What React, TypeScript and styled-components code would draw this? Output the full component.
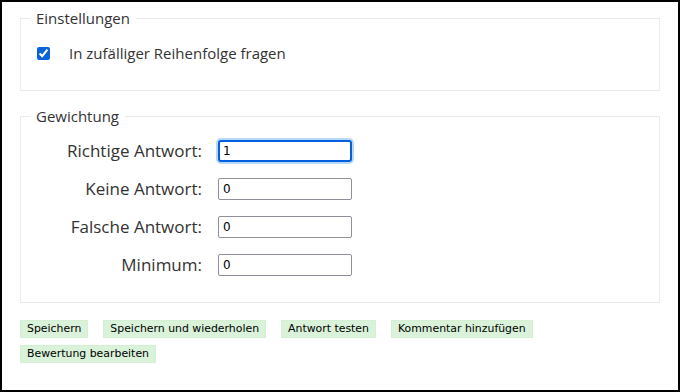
import React from "react";
import styled, { createGlobalStyle } from "styled-components";

const Global = createGlobalStyle`
  html, body { margin: 0; padding: 0; background: #fff; }
  * { box-sizing: border-box; }
`;

const Page = styled.div`
  width: 680px;
  height: 392px;
  border: 2px solid #000;
  padding: 8px 18px 0 18px;
  font-family: "Open Sans", "Noto Sans", sans-serif;
  color: #333;
  background: #fff;
`;

const Fieldset = styled.fieldset`
  margin: 0 0 17px 0;
  border: 1px solid #eaeaea;
  padding: 0;
  min-width: 0;
`;

const Legend = styled.legend`
  margin-left: 9px;
  padding: 0 6px;
  font-size: 15px;
  line-height: 16px;
  color: #333;
`;

const CheckRow = styled.label`
  display: flex;
  align-items: center;
  gap: 19px;
  padding: 17px 0 27px 16px;
  font-size: 15px;
  line-height: 20px;
  color: #333;
`;

const Check = styled.input`
  margin: 0;
  width: 13px;
  height: 13px;
  accent-color: #0b63d9;
`;

const Grid = styled.div`
  display: grid;
  grid-template-columns: 181px 134px;
  column-gap: 16px;
  row-gap: 16px;
  align-items: center;
  padding: 16px 0 26px 0;
`;

const FieldLabel = styled.label`
  text-align: right;
  font-size: 17px;
  line-height: 22px;
  color: #333;
`;

const Input = styled.input<{ $focused?: boolean }>`
  width: 134px;
  height: 22px;
  margin: 0;
  padding: 1px 4px;
  font-family: "DejaVu Sans", sans-serif;
  font-size: 12px;
  color: #000;
  border: 1px solid #8f8f9d;
  border-radius: 2px;
  background: #fff;
  ${(p) =>
    p.$focused &&
    `border: 2px solid #0060df; padding: 0 3px; box-shadow: 0 0 0 2px #b8d8f8; outline: none; border-radius: 3px;`}
`;

const Buttons = styled.div`
  display: flex;
  flex-wrap: wrap;
  column-gap: 15px;
  row-gap: 7px;
`;

const Button = styled.button`
  margin: 0;
  padding: 0 6px;
  height: 18px;
  border: 1px solid #d4efd4;
  background: #d9f2d9;
  font-family: "DejaVu Sans", sans-serif;
  font-size: 10.9px;
  color: #000;
  line-height: 16px;
  cursor: pointer;
`;

const fields = [
  { label: "Richtige Antwort:", value: "1", focused: true },
  { label: "Keine Antwort:", value: "0" },
  { label: "Falsche Antwort:", value: "0" },
  { label: "Minimum:", value: "0" },
];

const actions = [
  "Speichern",
  "Speichern und wiederholen",
  "Antwort testen",
  "Kommentar hinzufügen",
  "Bewertung bearbeiten",
];

export default function App() {
  return (
    <Page>
      <Global />
      <Fieldset>
        <Legend>Einstellungen</Legend>
        <CheckRow>
          <Check type="checkbox" defaultChecked />
          In zufälliger Reihenfolge fragen
        </CheckRow>
      </Fieldset>
      <Fieldset>
        <Legend>Gewichtung</Legend>
        <Grid>
          {fields.map((f) => (
            <React.Fragment key={f.label}>
              <FieldLabel>{f.label}</FieldLabel>
              <Input $focused={f.focused} defaultValue={f.value} />
            </React.Fragment>
          ))}
        </Grid>
      </Fieldset>
      <Buttons>
        {actions.map((a) => (
          <Button key={a}>{a}</Button>
        ))}
      </Buttons>
    </Page>
  );
}
